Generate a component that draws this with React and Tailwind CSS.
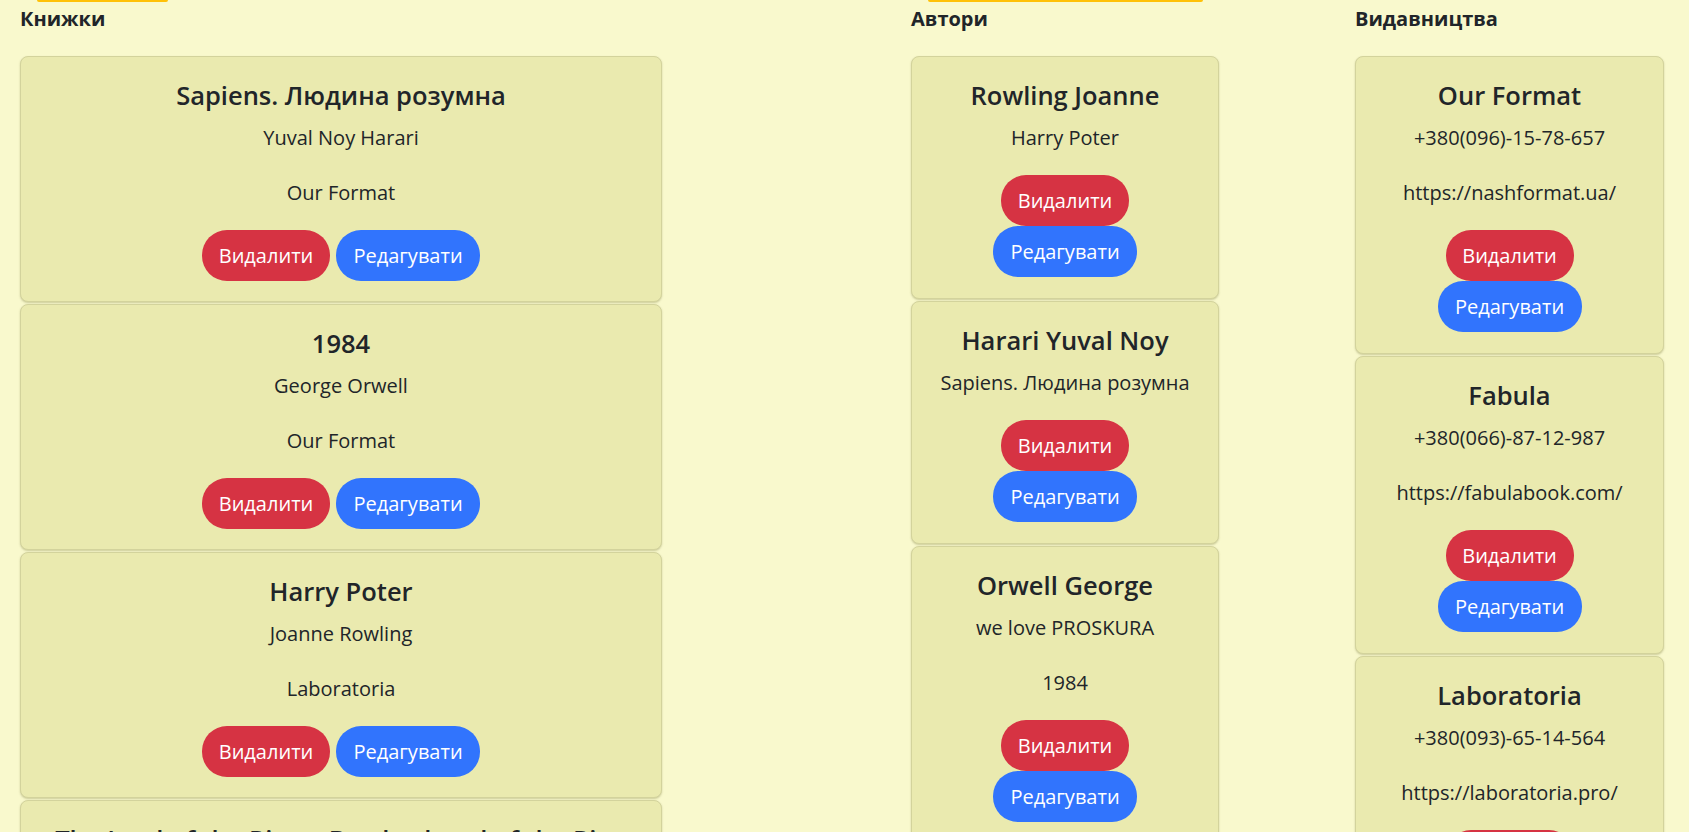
import React from "react";

const font = { fontFamily: '"Open Sans", "Noto Sans", sans-serif' };

function Btns({ stacked }) {
  const red =
    "inline-flex items-center justify-center h-[51px] w-[128px] rounded-[25px] bg-[#d63343] text-white text-[20px] whitespace-nowrap";
  const blue =
    "inline-flex items-center justify-center h-[51px] w-[144px] rounded-[25px] bg-[#3174fd] text-white text-[20px] whitespace-nowrap";
  if (stacked) {
    return (
      <div className="flex flex-col items-center">
        <button className={red}>Видалити</button>
        <button className={blue}>Редагувати</button>
      </div>
    );
  }
  return (
    <div className="flex justify-center gap-[6px]">
      <button className={red}>Видалити</button>
      <button className={blue}>Редагувати</button>
    </div>
  );
}

function Card({ title, lines, stacked }) {
  return (
    <div
      className={
        "rounded-lg border border-[#d3d39c] bg-[#eaeaaf] shadow-[0_1px_2px_rgba(120,120,60,0.35)] pt-[23px] px-[16px] text-center text-[#212529] " +
        (stacked ? "pb-[21px]" : "pb-[20px]")
      }
    >
      <div className="text-[25.5px] font-[560] leading-[30px] mb-[13px]">
        {title}
      </div>
      {lines.map((l, i) => (
        <div
          key={i}
          className={
            "text-[20px] leading-[30px] " +
            (i === lines.length - 1 ? "mb-[22px]" : "mb-[25px]")
          }
        >
          {l}
        </div>
      ))}
      <Btns stacked={stacked} />
    </div>
  );
}

function Column({ heading, bar, children, className }) {
  return (
    <div className={"flex flex-col " + className}>
      <div className="h-[2px] flex">
        <div className={"h-[2px] rounded-b-[2px] " + bar} />
      </div>
      <div className="mt-[2px] h-[30px] text-[20px] font-bold leading-[30px] text-[#212529] whitespace-nowrap">
        {heading}
      </div>
      <div className="mt-[22px] flex flex-col gap-[2px]">{children}</div>
    </div>
  );
}

export default function App() {
  const books = [
    ["Sapiens. Людина розумна", "Yuval Noy Harari", "Our Format"],
    ["1984", "George Orwell", "Our Format"],
    ["Harry Poter", "Joanne Rowling", "Laboratoria"],
    ["The Lord of the Rings: Brotherhood of the Ring", "John Tolkien", "Fabula"],
  ];
  const authors = [
    ["Rowling Joanne", ["Harry Poter"]],
    ["Harari Yuval Noy", ["Sapiens. Людина розумна"]],
    ["Orwell George", ["we love PROSKURA", "1984"]],
  ];
  const pubs = [
    ["Our Format", ["+380(096)-15-78-657", "https://nashformat.ua/"]],
    ["Fabula", ["+380(066)-87-12-987", "https://fabulabook.com/"]],
    ["Laboratoria", ["+380(093)-65-14-564", "https://laboratoria.pro/"]],
  ];
  return (
    <div
      style={font}
      className="h-[832px] w-full overflow-hidden bg-[#f9f9cd] flex items-start pl-[20px]"
    >
      <Column
        heading="Книжки"
        bar="ml-[17px] w-[131px] bg-[#ffc107]"
        className="w-[642px]"
      >
        {books.map((b, i) => (
          <Card key={i} title={b[0]} lines={[b[1], b[2]]} />
        ))}
      </Column>
      <Column
        heading="Автори"
        bar="ml-[17px] w-[275px] bg-[#ffc107]"
        className="w-[308px] ml-[249px]"
      >
        {authors.map((a, i) => (
          <Card key={i} title={a[0]} lines={a[1]} stacked />
        ))}
      </Column>
      <Column
        heading="Видавництва"
        bar="w-0 bg-transparent"
        className="w-[309px] ml-[136px]"
      >
        {pubs.map((p, i) => (
          <Card key={i} title={p[0]} lines={p[1]} stacked />
        ))}
      </Column>
    </div>
  );
}
